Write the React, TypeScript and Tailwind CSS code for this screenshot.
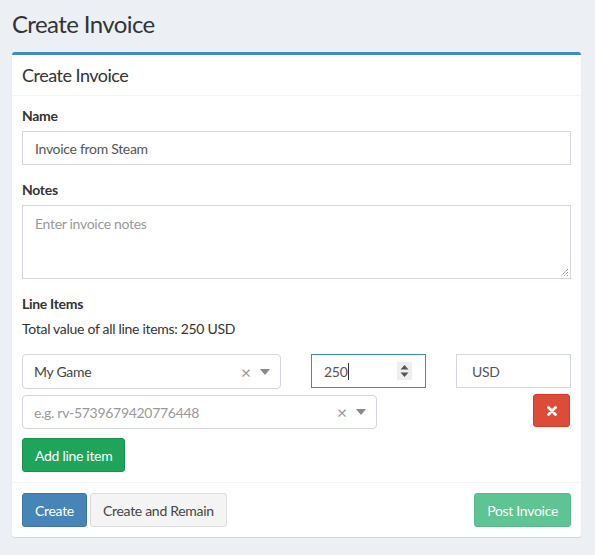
import React from "react";

const font = { fontFamily: "Lato, 'Noto Sans', sans-serif" };

function ClearAndArrow() {
  return (
    <div className="flex items-center gap-[9px] pr-[10px] text-[#999]">
      <span className="text-[18px] leading-none">×</span>
      <svg width="10" height="6" viewBox="0 0 10 6">
        <path d="M0 0 L10 0 L5 6 Z" fill="#888" />
      </svg>
    </div>
  );
}

export default function App() {
  return (
    <div className="min-h-[555px] w-full bg-[#ecf0f5] text-[#333] text-[14px] tracking-[-0.3px]" style={font}>
      {/* Page title */}
      <div className="px-3 pt-[10px]">
        <h1 className="text-[24px] leading-[28px] tracking-[-0.6px] text-[#333]">Create Invoice</h1>
      </div>

      {/* Box */}
      <div className="mt-[14px] ml-3 mr-[14px] rounded-[3px] border-t-[3px] border-[#3c8dbc] bg-white shadow-[0_1px_1px_rgba(0,0,0,0.1)]">
        <div className="border-b border-[#f4f4f4] px-[10px] h-[41px] flex items-center">
          <h3 className="text-[18px] leading-none tracking-[-0.5px]">Create Invoice</h3>
        </div>

        <div className="p-[10px]">
          <div className="mb-[15px]">
            <label className="block font-bold leading-[20px] mb-[5px]">Name</label>
            <div className="h-[34px] border border-[#d2d6de] px-3 flex items-center text-[#555]">
              Invoice from Steam
            </div>
          </div>

          <div className="mb-[15px]">
            <label className="block font-bold leading-[20px] mb-[5px]">Notes</label>
            <div className="relative h-[74px] border border-[#d2d6de] px-3 pt-[7px] text-[#999]">
              Enter invoice notes
              <svg className="absolute right-[1px] bottom-[1px]" width="9" height="9" viewBox="0 0 9 9">
                <path d="M8 1 L1 8 M8 4 L4 8 M8 7 L7 8" stroke="#666" strokeWidth="1" strokeDasharray="1 1" />
              </svg>
            </div>
          </div>

          <label className="block font-bold leading-[20px] mb-[5px]">Line Items</label>
          <p className="leading-[20px] mb-[15px]">Total value of all line items: 250 USD</p>

          {/* Line item row */}
          <div className="flex items-start">
            <div className="w-[259px] h-[35px] border border-[#d2d6de] rounded-[4px] flex items-center justify-between pl-[11px]">
              <span className="text-[#444]">My Game</span>
              <ClearAndArrow />
            </div>
            <div className="ml-[30px] w-[115px] h-[34px] border border-[#3c8dbc] flex items-center justify-between pl-3 pr-[13px]">
              <span className="flex items-center text-[#555]">
                250<span className="ml-[1px] inline-block w-px h-[17px] bg-[#333]" />
              </span>
              <svg width="15" height="18" viewBox="0 0 15 18">
                <rect width="15" height="18" fill="#eee" />
                <path d="M3.5 7.5 L7.5 3 L11.5 7.5 Z M3.5 10.5 L7.5 15 L11.5 10.5 Z" fill="#555" />
              </svg>
            </div>
            <div className="ml-[30px] w-[115px] h-[34px] border border-[#d2d6de] flex items-center px-[15px] text-[#555]">
              USD
            </div>
          </div>

          <div className="mt-[6px] flex items-start justify-between">
            <div className="w-[355px] h-[34px] border border-[#d2d6de] rounded-[4px] flex items-center justify-between pl-[11px]">
              <span className="text-[#999]">e.g. rv-5739679420776448</span>
              <ClearAndArrow />
            </div>
            <button className="-mt-px mr-px w-[37px] h-[33px] rounded-[3px] bg-[#dd4b39] border border-[#d73925] flex items-center justify-center">
              <svg width="10" height="10" viewBox="0 0 10 10">
                <path d="M1.5 1.5 L8.5 8.5 M8.5 1.5 L1.5 8.5" stroke="white" strokeWidth="2.8" strokeLinecap="round" />
              </svg>
            </button>
          </div>

          <button className="mt-[9px] h-[34px] px-3 rounded-[3px] bg-[#1ea55b] border border-[#199050] text-white">
            Add line item
          </button>
        </div>

        {/* Footer */}
        <div className="border-t border-[#f4f4f4] p-[10px] flex items-center">
          <button className="h-[34px] px-3 rounded-[3px] bg-[#4785b8] border border-[#3d76a6] text-white">
            Create
          </button>
          <button className="ml-[3px] h-[34px] px-3 rounded-[3px] bg-[#f4f4f4] border border-[#ddd] text-[#444]">
            Create and Remain
          </button>
          <button className="ml-auto h-[34px] px-3 rounded-[3px] bg-[#5ec493] border border-[#55b888] text-white">
            Post Invoice
          </button>
        </div>
      </div>
    </div>
  );
}
